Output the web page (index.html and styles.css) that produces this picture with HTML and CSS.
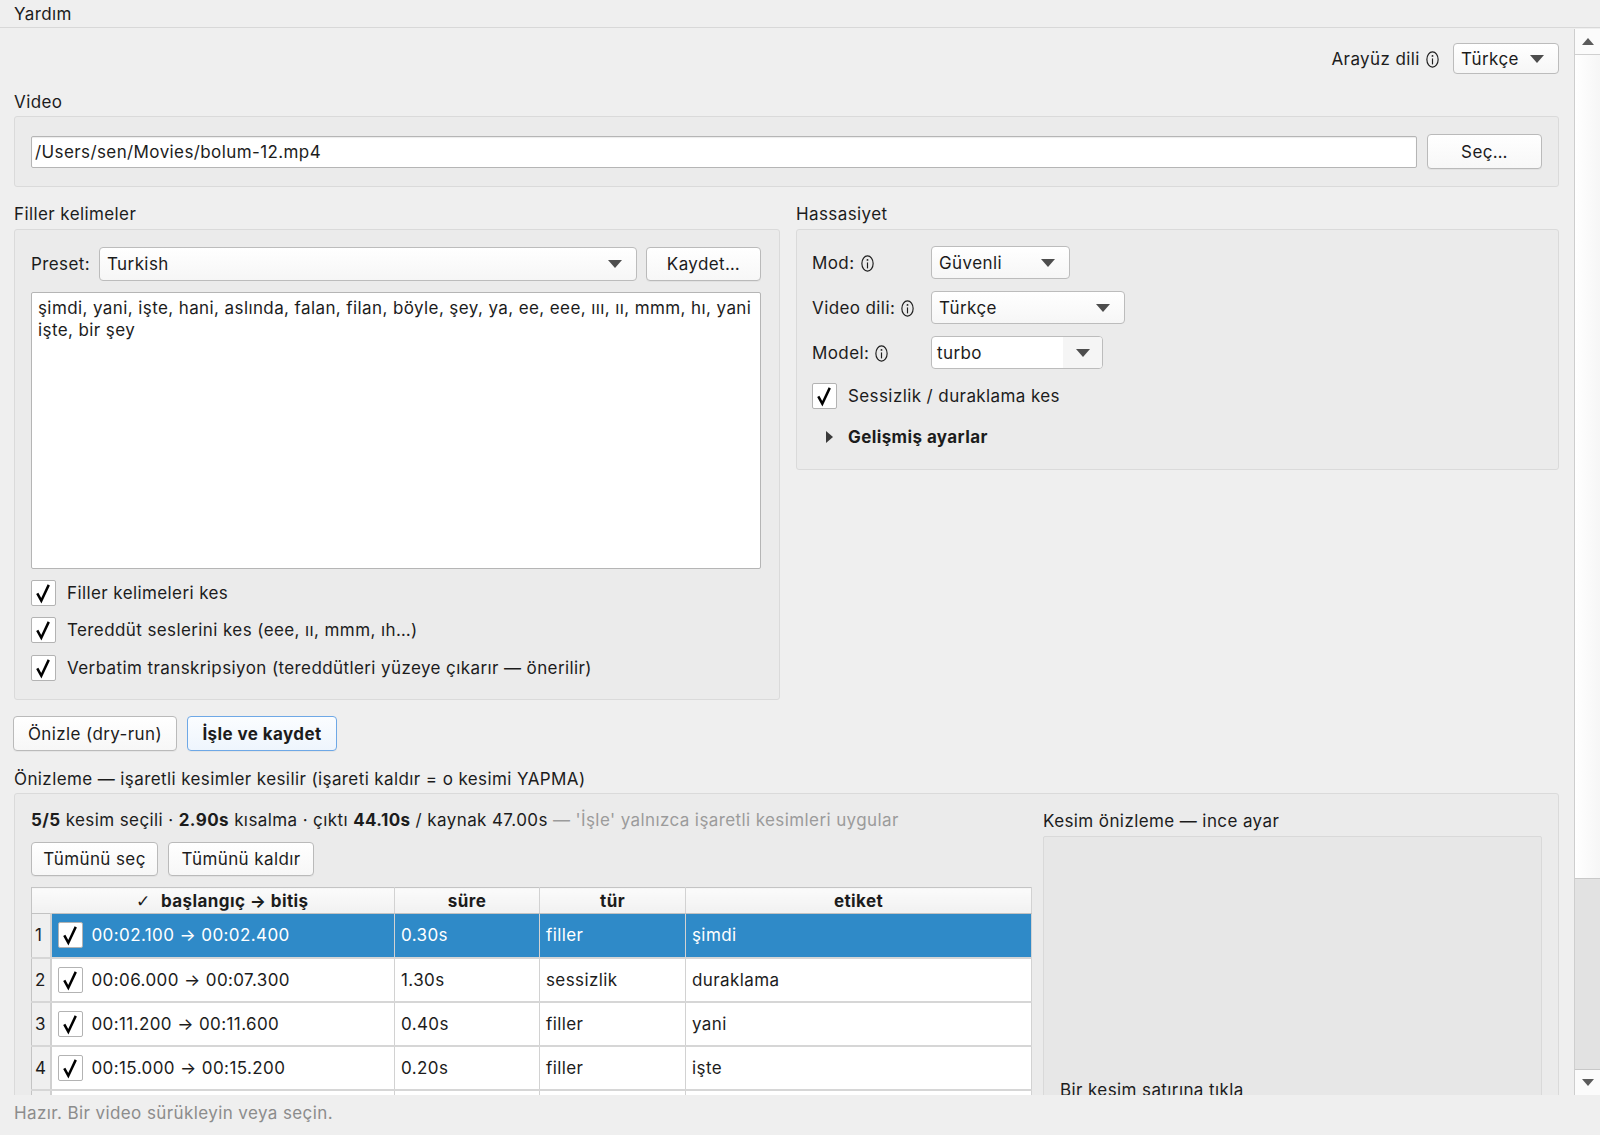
FILE: index.html
```html
<!DOCTYPE html>
<html lang="tr">
<head>
    <meta charset="UTF-8" />
    <title>Filler Kesici</title>
    <link rel="stylesheet" href="styles.css">
</head>
<body>

<div class="menubar"><span class="menu-item">Yardım</span></div>

<div class="window">
    <div class="content">

        <div class="lang-row">
            <span class="lang-label">Arayüz dili
                <svg class="info" viewBox="0 0 12 16"><ellipse cx="6" cy="8" rx="5.3" ry="7.2"/><circle class="dot" cx="6" cy="4.6" r="0.9"/><path d="M6 7v5.6"/></svg>
            </span>
            <div class="combo combo-lang">
                <span>Türkçe</span>
                <svg class="arrow" viewBox="0 0 14 8"><path d="M0 0h14L7 8z"/></svg>
            </div>
        </div>

        <div class="section-title">Video</div>
        <div class="group video-group">
            <div class="line-edit path-edit">/Users/sen/Movies/bolum-12.mp4</div>
            <button class="btn btn-browse">Seç…</button>
        </div>

        <div class="columns">
            <div class="col">
                <div class="section-title">Filler kelimeler</div>
                <div class="group filler-group">
                    <div class="preset-row">
                        <span class="form-label">Preset:</span>
                        <div class="combo combo-preset">
                            <span>Turkish</span>
                            <svg class="arrow" viewBox="0 0 14 8"><path d="M0 0h14L7 8z"/></svg>
                        </div>
                        <button class="btn btn-save">Kaydet…</button>
                    </div>
                    <div class="text-edit"><span class="nowrap">şimdi, yani, işte, hani, aslında, falan, filan, böyle, şey, ya, ee, eee, ııı, ıı, mmm, hı, yani</span><br>işte, bir şey</div>
                    <div class="check-list">
                        <div class="check-row">
                            <span class="checkbox"><svg viewBox="0 0 24 26"><path d="M5.5 13.5l4.2 7.5L17.5 4.5"/></svg></span>
                            <span>Filler kelimeleri kes</span>
                        </div>
                        <div class="check-row">
                            <span class="checkbox"><svg viewBox="0 0 24 26"><path d="M5.5 13.5l4.2 7.5L17.5 4.5"/></svg></span>
                            <span>Tereddüt seslerini kes (eee, ıı, mmm, ıh…)</span>
                        </div>
                        <div class="check-row">
                            <span class="checkbox"><svg viewBox="0 0 24 26"><path d="M5.5 13.5l4.2 7.5L17.5 4.5"/></svg></span>
                            <span>Verbatim transkripsiyon (tereddütleri yüzeye çıkarır — önerilir)</span>
                        </div>
                    </div>
                </div>
            </div>

            <div class="col">
                <div class="section-title">Hassasiyet</div>
                <div class="group sens-group">
                    <div class="form-grid">
                        <span class="form-label">Mod:
                            <svg class="info" viewBox="0 0 12 16"><ellipse cx="6" cy="8" rx="5.3" ry="7.2"/><circle class="dot" cx="6" cy="4.6" r="0.9"/><path d="M6 7v5.6"/></svg>
                        </span>
                        <div class="combo combo-mode">
                            <span>Güvenli</span>
                            <svg class="arrow" viewBox="0 0 14 8"><path d="M0 0h14L7 8z"/></svg>
                        </div>

                        <span class="form-label">Video dili:
                            <svg class="info" viewBox="0 0 12 16"><ellipse cx="6" cy="8" rx="5.3" ry="7.2"/><circle class="dot" cx="6" cy="4.6" r="0.9"/><path d="M6 7v5.6"/></svg>
                        </span>
                        <div class="combo combo-vlang">
                            <span>Türkçe</span>
                            <svg class="arrow" viewBox="0 0 14 8"><path d="M0 0h14L7 8z"/></svg>
                        </div>

                        <span class="form-label">Model:
                            <svg class="info" viewBox="0 0 12 16"><ellipse cx="6" cy="8" rx="5.3" ry="7.2"/><circle class="dot" cx="6" cy="4.6" r="0.9"/><path d="M6 7v5.6"/></svg>
                        </span>
                        <div class="combo-edit">
                            <span class="combo-edit-text">turbo</span>
                            <span class="combo-edit-btn"><svg class="arrow" viewBox="0 0 14 8"><path d="M0 0h14L7 8z"/></svg></span>
                        </div>
                    </div>

                    <div class="check-row sens-check">
                        <span class="checkbox"><svg viewBox="0 0 24 26"><path d="M5.5 13.5l4.2 7.5L17.5 4.5"/></svg></span>
                        <span>Sessizlik / duraklama kes</span>
                    </div>

                    <div class="advanced">
                        <svg class="disclosure" viewBox="0 0 7 12"><path d="M0 0l7 6-7 6z"/></svg>
                        <span>Gelişmiş ayarlar</span>
                    </div>
                </div>
            </div>
        </div>

        <div class="action-row">
            <button class="btn btn-dry">Önizle (dry-run)</button>
            <button class="btn btn-default">İşle ve kaydet</button>
        </div>

        <div class="section-title preview-title">Önizleme — işaretli kesimler kesilir (işareti kaldır = o kesimi YAPMA)</div>
        <div class="group preview-group">
            <div class="preview-left">
                <div class="summary">
                    <b>5/5</b> kesim seçili · <b>2.90s</b> kısalma · çıktı <b>44.10s</b> / kaynak 47.00s <span class="muted">— 'İşle' yalnızca işaretli kesimleri uygular</span>
                </div>
                <div class="bulk-row">
                    <button class="btn btn-all">Tümünü seç</button>
                    <button class="btn btn-none">Tümünü kaldır</button>
                </div>
                <table class="cuts">
                    <thead>
                        <tr>
                            <th class="corner"></th>
                            <th class="c-range"><span class="hcheck">✓</span> başlangıç → bitiş</th>
                            <th class="c-dur">süre</th>
                            <th class="c-type">tür</th>
                            <th class="c-tag">etiket</th>
                        </tr>
                    </thead>
                    <tbody>
                        <tr class="selected">
                            <td class="num">1</td>
                            <td><span class="cell-check"><span class="checkbox"><svg viewBox="0 0 24 26"><path d="M5.5 13.5l4.2 7.5L17.5 4.5"/></svg></span>00:02.100 → 00:02.400</span></td>
                            <td>0.30s</td>
                            <td>filler</td>
                            <td>şimdi</td>
                        </tr>
                        <tr>
                            <td class="num">2</td>
                            <td><span class="cell-check"><span class="checkbox"><svg viewBox="0 0 24 26"><path d="M5.5 13.5l4.2 7.5L17.5 4.5"/></svg></span>00:06.000 → 00:07.300</span></td>
                            <td>1.30s</td>
                            <td>sessizlik</td>
                            <td>duraklama</td>
                        </tr>
                        <tr>
                            <td class="num">3</td>
                            <td><span class="cell-check"><span class="checkbox"><svg viewBox="0 0 24 26"><path d="M5.5 13.5l4.2 7.5L17.5 4.5"/></svg></span>00:11.200 → 00:11.600</span></td>
                            <td>0.40s</td>
                            <td>filler</td>
                            <td>yani</td>
                        </tr>
                        <tr>
                            <td class="num">4</td>
                            <td><span class="cell-check"><span class="checkbox"><svg viewBox="0 0 24 26"><path d="M5.5 13.5l4.2 7.5L17.5 4.5"/></svg></span>00:15.000 → 00:15.200</span></td>
                            <td>0.20s</td>
                            <td>filler</td>
                            <td>işte</td>
                        </tr>
                        <tr class="row-partial">
                            <td class="num"></td>
                            <td></td>
                            <td></td>
                            <td></td>
                            <td></td>
                        </tr>
                    </tbody>
                </table>
            </div>

            <div class="preview-right">
                <div class="sub-title">Kesim önizleme — ince ayar</div>
                <div class="fine-box">
                    <div class="fine-hint">Bir kesim satırına tıkla</div>
                </div>
            </div>
        </div>

    </div>

    <div class="scrollbar">
        <div class="sb-btn"><svg viewBox="0 0 12 7"><path d="M0 7h12L6 0z"/></svg></div>
        <div class="sb-thumb"></div>
        <div class="sb-track"></div>
        <div class="sb-btn sb-down"><svg viewBox="0 0 12 7"><path d="M0 0h12L6 7z"/></svg></div>
    </div>
</div>

<div class="statusbar">Hazır. Bir video sürükleyin veya seçin.</div>

</body>
</html>
```

FILE: styles.css
```css
* {
    box-sizing: border-box;
}

html, body {
    margin: 0;
    padding: 0;
}

body {
    width: 1600px;
    height: 1135px;
    overflow: hidden;
    background: #efefef;
    font-family: Inter, "Noto Sans", "DejaVu Sans", sans-serif;
    font-size: 17px;
    letter-spacing: 0.4px;
    color: #1c1c1c;
}

/* menu + status */

.menubar {
    height: 28px;
    padding-left: 14px;
    display: flex;
    align-items: center;
    border-bottom: 1px solid #d8d8d8;
}

.statusbar {
    height: 40px;
    padding: 0 0 4px 14px;
    display: flex;
    align-items: center;
    color: #8c8c8c;
}

.window {
    display: flex;
    height: 1067px;
}

.content {
    flex: 1;
    overflow: hidden;
    padding: 15px 15px 0 14px;
}

/* scrollbar */

.scrollbar {
    width: 26px;
    margin-top: 1px;
    display: flex;
    flex-direction: column;
    border-left: 1px solid #cecece;
    background: #f0f0f0;
}

.sb-btn {
    height: 26px;
    display: flex;
    align-items: center;
    justify-content: center;
    background: #fbfbfb;
    border-bottom: 1px solid #d0d0d0;
}

.sb-down {
    border-bottom: 0;
    border-top: 1px solid #c8c8c8;
}

.sb-btn svg {
    width: 12px;
    height: 7px;
    fill: #5b5b5b;
}

.sb-thumb {
    height: 824px;
    background: linear-gradient(to right, #ffffff, #f6f6f6);
    border-bottom: 1px solid #c9c9c9;
}

.sb-track {
    flex: 1;
    background: #e2e2e2;
}

/* common widgets */

.section-title {
    line-height: 20px;
    margin-top: 18px;
}

.group {
    margin-top: 4px;
    background: #ebebeb;
    border: 1px solid #dadada;
    border-radius: 3px;
}

.btn {
    height: 35px;
    padding: 0 6px;
    font: inherit;
    letter-spacing: inherit;
    white-space: nowrap;
    color: #1c1c1c;
    background: linear-gradient(#ffffff, #f7f7f7);
    border: 1px solid #bababa;
    border-radius: 4px;
    box-shadow: 0 1px 0 rgba(0, 0, 0, 0.04);
}

.combo {
    height: 33px;
    padding: 0 14px 0 7px;
    display: flex;
    align-items: center;
    justify-content: space-between;
    background: linear-gradient(#ffffff, #f6f6f6);
    border: 1px solid #bcbcbc;
    border-radius: 4px;
}

.arrow {
    width: 14px;
    height: 8px;
    fill: #4d4d4d;
}

.info {
    width: 13px;
    height: 17px;
    margin-left: 1px;
    vertical-align: -3px;
    fill: none;
    stroke: #1f1f1f;
    stroke-width: 1.1;
}

.info .dot {
    fill: #1f1f1f;
    stroke: none;
}

.line-edit {
    height: 32px;
    padding: 0 3px;
    display: flex;
    align-items: center;
    background: #fff;
    border: 1px solid #b5b5b5;
    border-radius: 2px;
    box-shadow: inset 0 1px 1px rgba(0, 0, 0, 0.08);
}

.checkbox {
    width: 25px;
    height: 26px;
    flex: none;
    display: inline-flex;
    align-items: center;
    justify-content: center;
    background: #fff;
    border: 1px solid #b3b3b3;
    border-radius: 2px;
}

.checkbox svg {
    width: 24px;
    height: 26px;
    fill: none;
    stroke: #000;
    stroke-width: 2.6;
}

.check-row {
    display: flex;
    align-items: center;
    gap: 11px;
}

/* language row */

.lang-row {
    height: 31px;
    display: flex;
    justify-content: flex-end;
    align-items: center;
    gap: 14px;
}

.combo-lang {
    width: 106px;
    height: 31px;
}

/* video */

.video-group {
    height: 71px;
    padding: 0 16px 0 16px;
    display: flex;
    align-items: center;
    gap: 10px;
}

.path-edit {
    flex: 1;
}

.btn-browse {
    width: 115px;
}

/* filler + sensitivity */

.columns {
    display: grid;
    grid-template-columns: 766px 1fr;
    gap: 16px;
    align-items: start;
}

.columns .section-title {
    margin-top: 17px;
}

.columns .group {
    margin-top: 5px;
}

.filler-group {
    height: 471px;
    padding: 17px 18px 0 16px;
}

.preset-row {
    height: 34px;
    display: flex;
    align-items: center;
}

.preset-row .form-label {
    width: 68px;
}

.combo-preset {
    flex: 1;
    height: 34px;
    margin-right: 9px;
}

.btn-save {
    width: 115px;
    height: 34px;
}

.text-edit {
    height: 277px;
    margin-top: 11px;
    padding: 4px 6px;
    line-height: 22px;
    background: #fff;
    border: 1px solid #b5b5b5;
    border-radius: 2px;
}

.nowrap {
    white-space: nowrap;
}

.check-list {
    margin-top: 5px;
}

.check-list .check-row {
    height: 37.5px;
}

.sens-group {
    height: 241px;
    padding: 16px 16px 0 15px;
}

.form-grid {
    display: grid;
    grid-template-columns: 119px auto;
    row-gap: 12px;
    align-items: center;
    justify-items: start;
}

.combo-mode {
    width: 139px;
}

.combo-vlang {
    width: 194px;
}

.combo-edit {
    width: 172px;
    height: 33px;
    display: flex;
    background: #fff;
    border: 1px solid #bcbcbc;
    border-radius: 4px;
    overflow: hidden;
}

.combo-edit-text {
    flex: 1;
    padding-left: 5px;
    display: flex;
    align-items: center;
}

.combo-edit-btn {
    width: 39px;
    display: flex;
    align-items: center;
    justify-content: center;
    background: #f5f5f5;
}

.sens-check {
    margin-top: 14px;
}

.advanced {
    margin-top: 18px;
    height: 20px;
    display: flex;
    align-items: center;
    font-weight: 700;
}

.disclosure {
    width: 7px;
    height: 12px;
    margin-left: 14px;
    margin-right: 15px;
    fill: #3a3a3a;
}

/* actions */

.action-row {
    margin-top: 16px;
    margin-left: -1px;
    display: flex;
    gap: 10px;
}

.btn-dry {
    width: 164px;
}

.btn-default {
    width: 150px;
    font-weight: 700;
    border-color: #6ea8e6;
    background: linear-gradient(#fbfdff, #eef5fd);
}

/* preview */

.preview-group {
    height: 400px;
    padding: 16px 16px 0 16px;
    display: flex;
    gap: 11px;
}

.preview-left {
    flex: 0 0 1001px;
}

.summary {
    line-height: 20px;
    white-space: nowrap;
}

.summary b {
    font-weight: 700;
}

.muted {
    color: #9b9b9b;
}

.bulk-row {
    margin-top: 12px;
    display: flex;
    gap: 10px;
}

.bulk-row .btn {
    height: 34px;
}

.btn-all {
    width: 127px;
}

.btn-none {
    width: 146px;
}

.cuts {
    margin-top: 11px;
    width: 1001px;
    border-collapse: collapse;
    table-layout: fixed;
    background: #fff;
    border: 1px solid #c4c4c4;
}

.cuts th {
    height: 26px;
    padding: 0;
    font-weight: 700;
    background: linear-gradient(#fbfbfb, #f1f1f1);
    border-right: 1px solid #d2d2d2;
    border-bottom: 1px solid #c2c2c2;
}

.cuts th.corner {
    width: 19px;
    border-right: 0;
}

.c-range {
    width: 344px;
}

.c-dur {
    width: 145px;
}

.c-type {
    width: 146px;
}

.hcheck {
    font-family: "DejaVu Sans", sans-serif;
    font-weight: 700;
    margin-right: 6px;
}

.cuts td {
    height: 44px;
    padding: 0 6px;
    border-right: 1px solid #d2d2d2;
    border-bottom: 2px solid #d6d6d6;
    white-space: nowrap;
}

.cuts td.num {
    padding: 0 0 0 3px;
    background: #efefef;
    border-right: 2px solid #d0d0d0;
}

.cell-check {
    display: flex;
    align-items: center;
    gap: 9px;
}

.selected td {
    background: #2f8ac8;
    color: #fff;
}

.selected td.num {
    background: #efefef;
    color: #1c1c1c;
}

.preview-right {
    flex: 1;
}

.sub-title {
    line-height: 20px;
    margin-top: 1px;
}

.fine-box {
    height: 300px;
    margin-top: 5px;
    padding: 243px 16px 0;
    background: #e7e7e7;
    border: 1px solid #d9d9d9;
    border-radius: 2px;
}

.fine-hint {
    line-height: 20px;
}
```
